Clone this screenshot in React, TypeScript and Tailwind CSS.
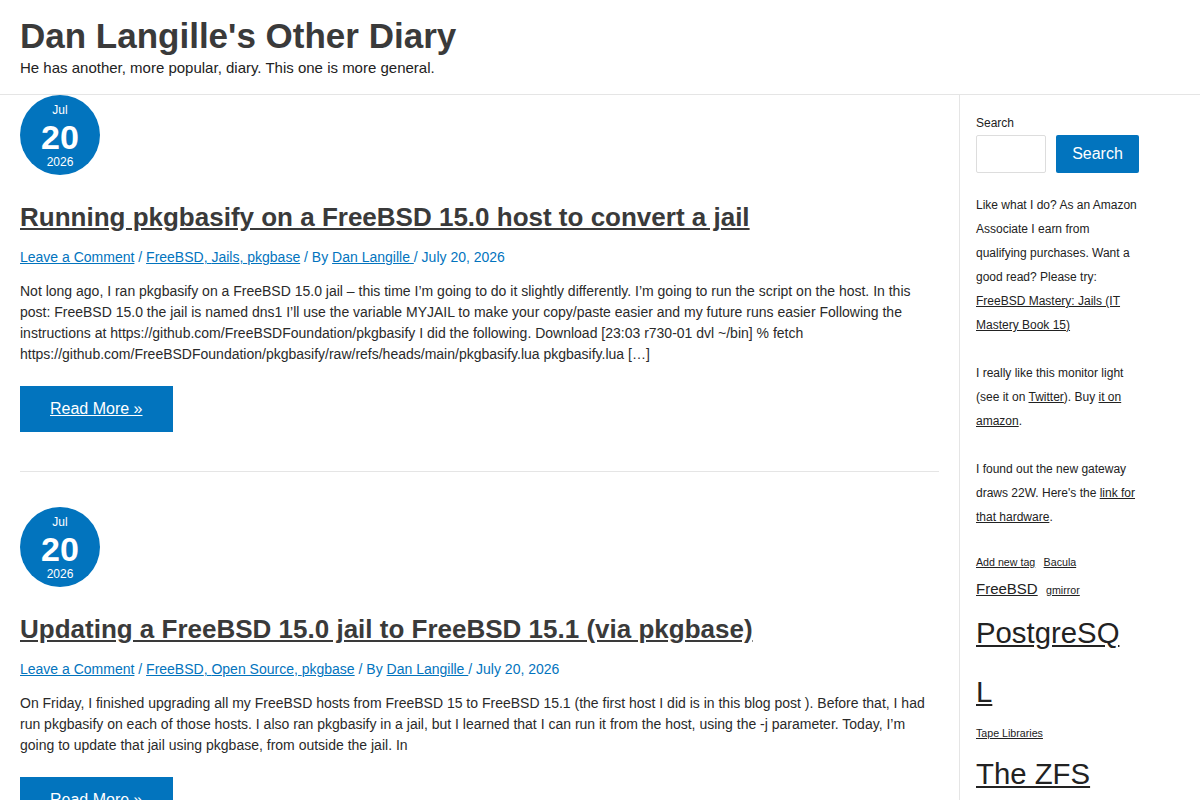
import React from "react";

type Post = {
  title: string;
  categories: string[];
  excerpt: string;
};

const posts: Post[] = [
  {
    title: "Running pkgbasify on a FreeBSD 15.0 host to convert a jail",
    categories: ["FreeBSD", "Jails", "pkgbase"],
    excerpt:
      "Not long ago, I ran pkgbasify on a FreeBSD 15.0 jail – this time I’m going to do it slightly differently. I’m going to run the script on the host. In this post: FreeBSD 15.0 the jail is named dns1 I’ll use the variable MYJAIL to make your copy/paste easier and my future runs easier Following the instructions at https://github.com/FreeBSDFoundation/pkgbasify I did the following. Download [23:03 r730-01 dvl ~/bin] % fetch https://github.com/FreeBSDFoundation/pkgbasify/raw/refs/heads/main/pkgbasify.lua pkgbasify.lua […]",
  },
  {
    title: "Updating a FreeBSD 15.0 jail to FreeBSD 15.1 (via pkgbase)",
    categories: ["FreeBSD", "Open Source", "pkgbase"],
    excerpt:
      "On Friday, I finished upgrading all my FreeBSD hosts from FreeBSD 15 to FreeBSD 15.1 (the first host I did is in this blog post ). Before that, I had run pkgbasify on each of those hosts. I also ran pkgbasify in a jail, but I learned that I can run it from the host, using the -j parameter. Today, I’m going to update that jail using pkgbase, from outside the jail. In",
  },
];

// tag cloud: 8pt smallest, 22pt largest
const tags = [
  { name: "Add new tag", size: "text-[10.67px]" },
  { name: "Bacula", size: "text-[10.67px]" },
  { name: "FreeBSD", size: "text-[15px]" },
  { name: "gmirror", size: "text-[10.67px]" },
  { name: "PostgreSQL", size: "text-[29.33px]" },
  { name: "Tape Libraries", size: "text-[10.67px]" },
  { name: "The ZFS", size: "text-[29.33px]" },
];

function DateBadge() {
  return (
    <div className="w-20 h-20 rounded-full bg-[#0274be] text-white flex flex-col items-center pt-[7px]">
      <span className="text-[12px] leading-[16px]">Jul</span>
      <span className="mt-[2px] text-[34px] font-bold leading-[35px]">20</span>
      <span className="-mt-[1px] text-[12px] leading-[16px]">2026</span>
    </div>
  );
}

function PostEntry({ post, last }: { post: Post; last?: boolean }) {
  return (
    <article className={last ? "pt-[35px]" : "pt-0 pb-[39px] border-b border-[#e5e5e5]"}>
      <DateBadge />
      <h2 className="mt-[27px] text-[26px] leading-[31px] font-bold text-[#3a3a3a]">
        <a href="#" className="underline">
          {post.title}
        </a>
      </h2>
      <div className="mt-[14px] text-[14px] leading-[21px] text-[#0274be]">
        <a href="#" className="underline">Leave a Comment</a>
        {" / "}
        {post.categories.map((c, i) => (
          <a key={c} href="#" className="underline">
            {c}
            {i < post.categories.length - 1 ? ", " : ""}
          </a>
        ))}
        {" / By "}
        <a href="#" className="underline">Dan Langille </a>
        {"/ July 20, 2026"}
      </div>
      <p className="mt-[13px] text-[14px] leading-[21px] text-[#2a2a2a]">{post.excerpt}</p>
      <a
        href="#"
        className="mt-[21px] inline-block bg-[#0274be] text-white text-[16px] leading-[46px] px-[30px] underline"
      >
        Read More »
      </a>
    </article>
  );
}

export default function App() {
  return (
    <div className="min-h-screen bg-white font-['Liberation_Sans',Arial,sans-serif] text-[#3a3a3a]">
      <header className="px-5 pt-[15px] h-[95px] border-b border-[#e5e5e5]">
        <h1 className="text-[35px] font-bold leading-[42px] text-[#3a3a3a]">Dan Langille's Other Diary</h1>
        <p className="text-[15px] leading-[21px] text-[#222]">
          He has another, more popular, diary. This one is more general.
        </p>
      </header>

      <div className="flex">
        <main className="w-[959px] px-5">
          {posts.map((p, i) => (
            <PostEntry key={p.title} post={p} last={i === posts.length - 1} />
          ))}
        </main>

        <aside className="w-[241px] border-l border-[#e5e5e5] pl-4 pt-[20px] text-[#222]">
          <div className="w-[164px]">
            <label className="block text-[12px] leading-[16px]">Search</label>
            <div className="mt-[4px] flex gap-[10px] w-[180px]">
              <input className="w-[70px] h-[38px] border border-[#ddd] rounded-[2px]" />
              <button className="h-[38px] w-[83px] bg-[#0274be] text-white text-[16px] rounded-[2px]">
                Search
              </button>
            </div>

            <div className="mt-[20px] text-[12px] leading-[24px] space-y-[24px]">
              <p>
                Like what I do? As an Amazon Associate I earn from qualifying purchases. Want a good read? Please
                try: <a href="#" className="underline">FreeBSD Mastery: Jails (IT Mastery Book 15)</a>
              </p>
              <p>
                I really like this monitor light (see it on <a href="#" className="underline">Twitter</a>). Buy{" "}
                <a href="#" className="underline">it on amazon</a>.
              </p>
              <p>
                I found out the new gateway draws 22W. Here's the{" "}
                <a href="#" className="underline">link for that hardware</a>.
              </p>
            </div>

            <div className="mt-[21px] w-[156px] text-[12px] leading-[2] [overflow-wrap:anywhere]">
              {tags.map((t) => (
                <React.Fragment key={t.name}>
                  <a href="#" className={`inline-block underline mr-[5px] ${t.size}`}>
                    {t.name}
                  </a>{" "}
                </React.Fragment>
              ))}
            </div>
          </div>
        </aside>
      </div>
    </div>
  );
}
